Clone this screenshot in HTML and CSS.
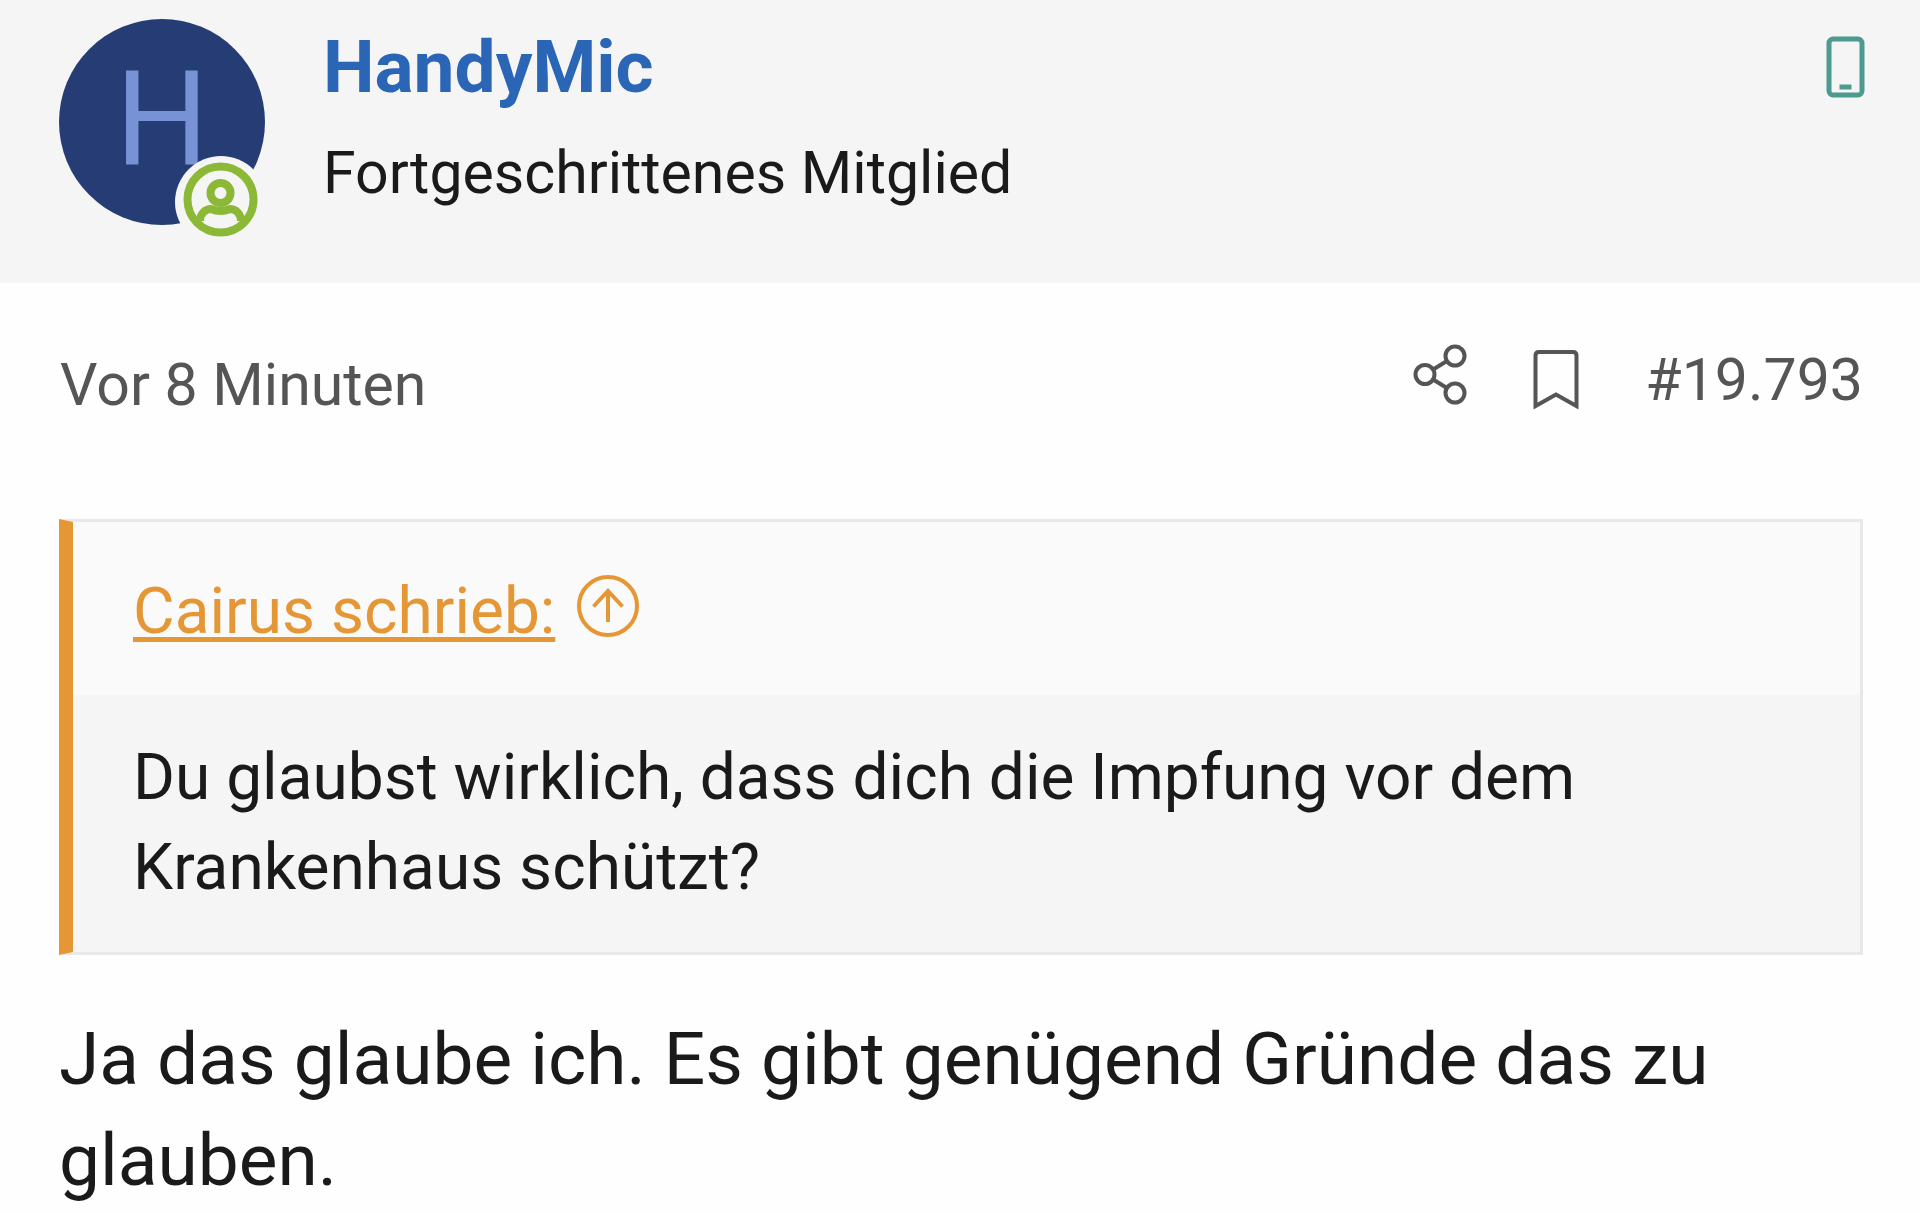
FILE: index.html
```html
<!DOCTYPE html>
<html lang="de">
<head>
<meta charset="utf-8">
<meta name="viewport" content="width=device-width, initial-scale=1">
<title>Beitrag #19.793</title>
<link rel="stylesheet" href="styles.css">
</head>
<body>
<article class="post">
  <header class="author">
    <div class="avatar">
      <span class="avatar-letter">H</span>
      <svg class="avatar-badge" viewBox="0 0 94 94" role="img" aria-label="Online">
        <circle class="badge-back" cx="47" cy="47" r="46"/>
        <circle cx="46.500" cy="44.500" r="33"/>
        <circle cx="46.500" cy="38" r="10"/>
        <path d="M26 66C26 59 31 54 37 54Q46.500 58 56 54C62 54 67 59 67 66"/>
      </svg>
    </div>
    <div class="author-text">
      <a class="author-name" href="#profil">HandyMic</a>
      <span class="author-title">Fortgeschrittenes Mitglied</span>
    </div>
    <svg class="device" viewBox="0 0 39 62" role="img" aria-label="Mobil">
      <rect x="3" y="3" width="33" height="56" rx="4"/>
      <path d="M13.500 51H25.500"/>
    </svg>
  </header>
  <div class="meta">
    <time class="meta-time">Vor 8 Minuten</time>
    <div class="actions">
      <button class="action" type="button" aria-label="Teilen">
        <svg class="icon-share" viewBox="0 0 54 72">
          <circle cx="12" cy="30.500" r="9.500"/>
          <circle cx="42" cy="12" r="9.500"/>
          <circle cx="42" cy="49" r="9.500"/>
          <path d="M20.500 25.200L33.500 17.300M20.500 35.800L33.500 43.700"/>
        </svg>
      </button>
      <button class="action" type="button" aria-label="Lesezeichen">
        <svg class="icon-bookmark" viewBox="0 0 46 72">
          <path d="M2.500 62V11.500Q2.500 8 6 8H40Q43.500 8 43.500 11.500V62L23 50.500Z"/>
        </svg>
      </button>
      <a class="post-number" href="#19793">#19.793</a>
    </div>
  </div>
  <div class="content">
    <blockquote class="quote">
      <div class="quote-head">
        <a class="quote-link" href="#zitat">Cairus schrieb:</a>
        <svg class="icon-up" viewBox="0 0 62 64" aria-hidden="true">
          <circle cx="31" cy="32" r="29"/>
          <path d="M31 48V17M16.500 32.500L31 17L45.500 32.500"/>
        </svg>
      </div>
      <p class="quote-body">Du glaubst wirklich, dass dich die Impfung vor dem Krankenhaus schützt?</p>
    </blockquote>
    <p class="message">Ja das glaube ich. Es gibt genügend Gründe das zu glauben.</p>
  </div>
</article>
</body>
</html>
```

FILE: styles.css
```css
* {
  box-sizing: border-box;
}

body {
  margin: 0;
  background: #fefefe;
  color: #1a1a1a;
  font-family: Roboto, "Liberation Sans", sans-serif;
}

p,
blockquote {
  margin: 0;
}

svg {
  display: block;
  fill: none;
  stroke: currentColor;
}

.author {
  display: flex;
  align-items: flex-start;
  padding: 19px 55px 58px 59px;
  background: #f5f5f5;
}

.avatar {
  position: relative;
  width: 206px;
  height: 206px;
  border-radius: 50%;
  background: #263c75;
  color: #7892d6;
  text-align: center;
}

.avatar-letter {
  font-size: 131px;
  line-height: 200px;
}

.avatar-badge {
  position: absolute;
  left: 115px;
  top: 136px;
  width: 94px;
  height: 94px;
  color: #8bb937;
  stroke-width: 8;
}

.badge-back {
  fill: #f5f5f5;
  stroke: none;
}

.author-text {
  display: flex;
  flex: 1;
  flex-direction: column;
  align-items: flex-start;
  gap: 26px;
  padding: 4px 0 0 58px;
}

.author-name {
  color: #2a66b5;
  font-size: 73px;
  font-weight: 700;
  line-height: 88px;
  text-decoration: none;
}

.author-title {
  font-size: 59px;
  line-height: 72px;
}

.device {
  width: 39px;
  height: 62px;
  margin-top: 17px;
  color: #4f9a8f;
  stroke-width: 5;
}

.meta {
  display: flex;
  align-items: flex-start;
  justify-content: space-between;
  padding: 61px 57px 98px 60px;
  color: #555;
  font-size: 59px;
  line-height: 72px;
}

.meta-time {
  padding-top: 5px;
}

.actions {
  display: flex;
  align-items: flex-start;
}

.action {
  padding: 0;
  border: 0;
  background: none;
  color: inherit;
}

.icon-share {
  width: 54px;
  height: 72px;
  margin-right: 66px;
  stroke-width: 4;
}

.icon-bookmark {
  width: 46px;
  height: 72px;
  margin-right: 66px;
  stroke-width: 4;
}

.post-number {
  color: inherit;
  text-decoration: none;
}

.content {
  padding: 0 57px 0 59px;
}

.quote {
  border: 3px solid #e8e8e8;
  border-left: 14px solid #e59735;
  background: #f5f5f5;
  font-size: 64px;
  line-height: 90px;
}

.quote-head {
  display: flex;
  align-items: flex-start;
  gap: 22px;
  padding: 45px 60px 38px;
  background: #fafafa;
  color: #e59735;
}

.quote-link {
  color: inherit;
  text-decoration-thickness: 5px;
  text-underline-offset: 4px;
  text-decoration-skip-ink: none;
}

.icon-up {
  width: 62px;
  height: 64px;
  margin-top: 7px;
  stroke-width: 4;
}

.quote-body {
  padding: 38px 60px 39px;
}

.message {
  padding-top: 54px;
  font-size: 73px;
  line-height: 101px;
}
```
